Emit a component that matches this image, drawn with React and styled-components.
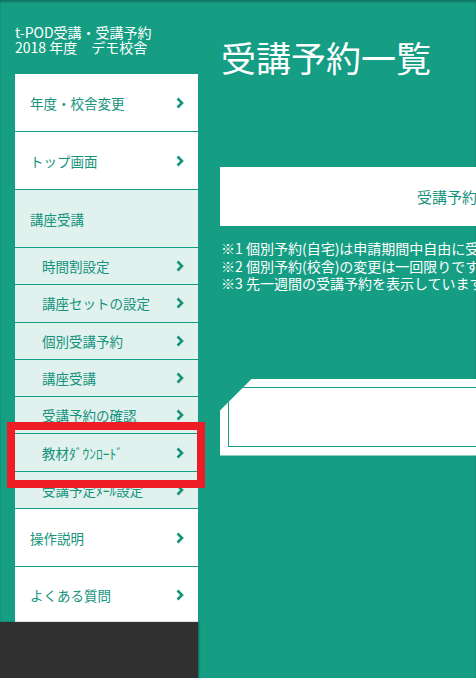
import React from "react";
import styled, { createGlobalStyle } from "styled-components";

const GlobalStyle = createGlobalStyle`
  html, body {
    margin: 0;
    padding: 0;
    overflow: hidden;
  }
  body {
    font-family: "Noto Sans CJK JP", "Liberation Sans", sans-serif;
    background: #169e84;
  }
`;

const TEAL = "#169e84";
const TEXT_TEAL = "#15937b";
const LIGHT = "#e1f1ee";

const topMenu = ["年度・校舎変更", "トップ画面"];

const subMenu = [
  "時間割設定",
  "講座セットの設定",
  "個別受講予約",
  "講座受講",
  "受講予約の確認",
  "教材ﾀﾞｳﾝﾛｰﾄﾞ",
  "受講予定ﾒｰﾙ設定",
];

const bottomMenu = ["操作説明", "よくある質問"];

const Chevron = () => (
  <svg width="8" height="12" viewBox="0 0 8 12">
    <polyline
      points="1.5,1.5 6,6 1.5,10.5"
      fill="none"
      stroke={TEXT_TEAL}
      strokeWidth="2.6"
    />
  </svg>
);

const App = () => {
  return (
    <>
      <GlobalStyle />
      <Page>
        <Sidebar>
          <SiteTitle>
            t-POD受講・受講予約
            <br />
            2018 年度　デモ校舎
          </SiteTitle>
          <Menu>
            {topMenu.map((m) => (
              <MenuItem key={m}>
                <span>{m}</span>
                <Chevron />
              </MenuItem>
            ))}
            <SectionHead>講座受講</SectionHead>
            {subMenu.map((s) => (
              <SubItem key={s}>
                <span>{s}</span>
                <Chevron />
              </SubItem>
            ))}
            {bottomMenu.map((b) => (
              <MenuItem key={b}>
                <span>{b}</span>
                <Chevron />
              </MenuItem>
            ))}
          </Menu>
        </Sidebar>
        <Main>
          <PageTitle>受講予約一覧</PageTitle>
          <ActionBox>受講予約する</ActionBox>
          <Notes>
            <li>※1 個別予約(自宅)は申請期間中自由に受講予約の変更ができます。</li>
            <li>※2 個別予約(校舎)の変更は一回限りです。</li>
            <li>※3 先一週間の受講予約を表示しています。</li>
          </Notes>
          <ListCard>
            <ListInner />
          </ListCard>
        </Main>
        <Highlight />
        <DarkBar />
      </Page>
    </>
  );
};

export default App;

const Page = styled.div`
  position: relative;
  display: flex;
  width: 476px;
  height: 678px;
  background: ${TEAL};
  box-shadow: inset 0 2px 2px rgba(0, 0, 0, 0.25);
  overflow: hidden;
`;

const Sidebar = styled.div`
  width: 198px;
  flex-shrink: 0;
  display: flex;
  flex-direction: column;
`;

const SiteTitle = styled.div`
  padding: 25px 0 0 15px;
  height: 74px;
  box-sizing: border-box;
  color: #fff;
  font-size: 14px;
  line-height: 15px;
  white-space: nowrap;
`;

const Menu = styled.div`
  margin-left: 15px;
  background: #fff;
  display: flex;
  flex-direction: column;
`;

const MenuItem = styled.div`
  height: 58px;
  box-sizing: border-box;
  border-bottom: 1px solid ${TEAL};
  background: #fff;
  display: flex;
  align-items: center;
  justify-content: space-between;
  padding: 0 14px 0 15px;
  color: ${TEXT_TEAL};
  font-size: 13.5px;

  &:last-child {
    border-bottom: none;
    height: 56px;
  }
`;

const SectionHead = styled.div`
  height: 58px;
  box-sizing: border-box;
  border-bottom: 1px solid ${TEAL};
  background: ${LIGHT};
  display: flex;
  align-items: center;
  padding-left: 15px;
  color: ${TEXT_TEAL};
  font-size: 13.5px;
`;

const SubItem = styled.div`
  height: 37.3px;
  box-sizing: border-box;
  border-bottom: 1px solid ${TEAL};
  background: ${LIGHT};
  display: flex;
  align-items: center;
  justify-content: space-between;
  padding: 0 14px 0 27px;
  color: ${TEXT_TEAL};
  font-size: 13.5px;
`;

const Main = styled.div`
  flex-shrink: 0;
  width: 520px;
  padding-left: 22px;
  display: flex;
  flex-direction: column;
`;

const PageTitle = styled.h1`
  margin: 38px 0 0 1px;
  color: #fff;
  font-weight: normal;
  font-size: 35px;
  line-height: 38px;
`;

const ActionBox = styled.div`
  margin: 91px 36px 0 0;
  height: 59px;
  background: #fff;
  display: flex;
  align-items: center;
  justify-content: center;
  color: ${TEXT_TEAL};
  font-size: 15px;
`;

const Notes = styled.ul`
  list-style: none;
  margin: 14px 0 0 1px;
  padding: 0;
  color: #fff;
  font-size: 14px;
  line-height: 17.5px;
  white-space: nowrap;
`;

const ListCard = styled.div`
  margin-top: 86px;
  height: 77px;
  background: #fff;
  padding: 8px 0 9px 8px;
  box-sizing: border-box;
  clip-path: polygon(32px 0, 100% 0, 100% 100%, 0 100%, 0 32px);
`;

const ListInner = styled.div`
  height: 100%;
  border: 1px solid ${TEAL};
  border-right: none;
  box-sizing: border-box;
`;

const Highlight = styled.div`
  position: absolute;
  left: 7px;
  top: 422px;
  width: 198px;
  height: 66px;
  box-sizing: border-box;
  border: 8px solid #ee1c25;
`;

const DarkBar = styled.div`
  position: absolute;
  left: 0;
  top: 622px;
  width: 198px;
  height: 56px;
  background: #303030;
  box-shadow: 1px 0 2px rgba(0, 0, 0, 0.35);
`;
